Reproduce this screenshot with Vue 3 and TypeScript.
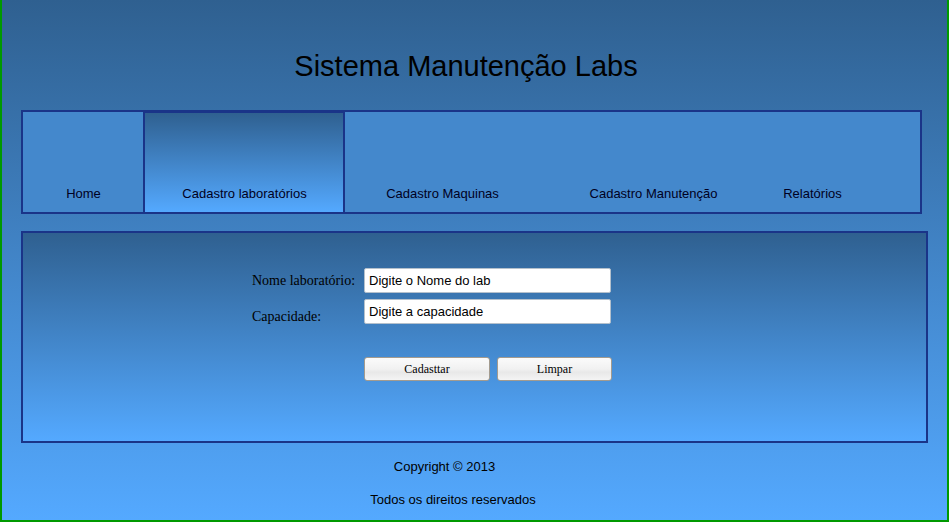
<script setup lang="ts">
import { ref } from 'vue'

interface NavItem {
  label: string
  active?: boolean
}

const items: NavItem[] = [
  { label: 'Home' },
  { label: 'Cadastro laboratórios', active: true },
  { label: 'Cadastro Maquinas' },
  { label: 'Cadastro Manutenção' },
  { label: 'Relatórios' },
]

const nome = ref('Digite o Nome do lab')
const capacidade = ref('Digite a capacidade')

function limpar(): void {
  nome.value = ''
  capacidade.value = ''
}
</script>

<template>
  <div class="page">
    <header class="header">
      <h1>Sistema Manutenção Labs</h1>
    </header>

    <nav class="nav">
      <a
        v-for="item in items"
        :key="item.label"
        href="#"
        class="nav-item"
        :class="{ active: item.active }"
        :aria-current="item.active ? 'page' : undefined"
      >{{ item.label }}</a>
    </nav>

    <main class="panel">
      <form class="form" @submit.prevent>
        <label class="label" for="nome">Nome laboratório:</label>
        <input id="nome" v-model="nome" class="field" type="text" />
        <label class="label label-low" for="capacidade">Capacidade:</label>
        <input id="capacidade" v-model="capacidade" class="field" type="text" />
        <div class="actions">
          <button class="btn" type="submit">Cadasttar</button>
          <button class="btn" type="button" @click="limpar">Limpar</button>
        </div>
      </form>
    </main>

    <footer class="footer">
      <p class="copyright">Copyright © 2013</p>
      <p>Todos os direitos reservados</p>
    </footer>
  </div>
</template>

<style>
body {
  margin: 0;
  background: #fff;
}
</style>

<style scoped>
.page {
  box-sizing: border-box;
  padding: 0 19px 12px;
  border: 2px solid #009900;
  border-top: 0;
  background: linear-gradient(#2f6090, #54a9ff);
  color: #000;
  font-family: "Liberation Sans", Arial, sans-serif;
  font-size: 13px;
  line-height: 16px;
}

.header {
  padding: 48px 17px 26px 0;
  text-align: center;
}

h1 {
  margin: 0;
  font-size: 29px;
  font-weight: 400;
  line-height: 36px;
}

.nav {
  display: grid;
  grid-template-columns: 120fr 202fr 194fr 228fr 90fr 63fr;
  height: 100px;
  margin-right: 6px;
  border: 2px solid #1a3488;
  background: #4488cc;
}

.nav-item {
  display: flex;
  box-sizing: border-box;
  align-items: flex-end;
  justify-content: center;
  padding: 0 0 10px 1px;
  color: #000022;
  text-decoration: none;
  white-space: nowrap;
}

.nav-item.active {
  border: 2px solid #1a3488;
  border-top-width: 1px;
  border-bottom: 0;
  background: linear-gradient(#2f6090, #54a9ff);
}

.panel {
  box-sizing: border-box;
  min-height: 212px;
  margin-top: 17px;
  padding: 35px 0 60px;
  border: 2px solid #1a3488;
  background: linear-gradient(#2f6090, #54a9ff);
}

.form {
  display: grid;
  grid-template-columns: 112px 248px;
  row-gap: 6px;
  justify-content: center;
  margin-right: 85px;
}

.label {
  font-family: "Liberation Serif", "Times New Roman", serif;
  font-size: 14px;
  line-height: 25px;
}

.label-low {
  padding-top: 5px;
}

.field {
  box-sizing: border-box;
  width: 247px;
  height: 25px;
  padding: 0 4px;
  border: 1px solid #b4c0cc;
  border-radius: 2px;
  background: #fff;
  color: #000;
  font: 13px "Liberation Sans", Arial, sans-serif;
}

.actions {
  display: grid;
  grid-column: 2;
  grid-template-columns: 126px 115px;
  gap: 7px;
  margin-top: 22px;
}

.btn {
  height: 24px;
  padding: 1px 0 0;
  border: 1px solid #a39b8f;
  border-radius: 3px;
  background: linear-gradient(#fbfbfb, #f1f1f1 50%, #e8e8e8 65%, #f4f4f4);
  color: #000;
  font: 12px "Liberation Serif", "Times New Roman", serif;
}

.footer {
  padding: 16px 43px 0 0;
  text-align: center;
}

.footer p {
  margin: 0;
}

.footer .copyright {
  margin: 0 17px 17px 0;
}
</style>
